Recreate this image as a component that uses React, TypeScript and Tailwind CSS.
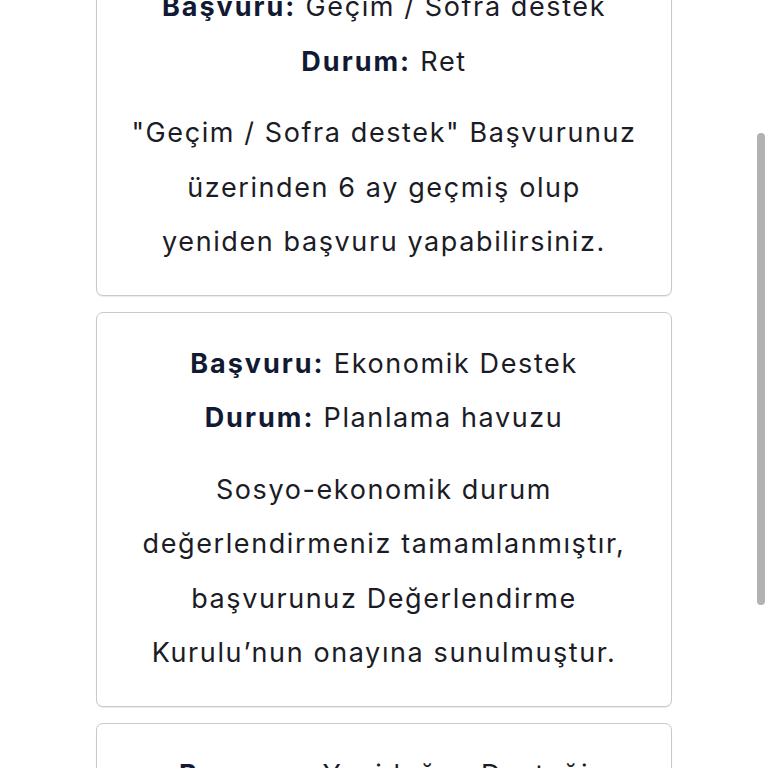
import React from "react";

type Item = {
  basvuru: string;
  durum: string;
  lines: string[];
};

const items: Item[] = [
  {
    basvuru: "Geçim / Sofra destek",
    durum: "Ret",
    lines: ['"Geçim / Sofra destek" Başvurunuz', "üzerinden 6 ay geçmiş olup", "yeniden başvuru yapabilirsiniz."],
  },
  {
    basvuru: "Ekonomik Destek",
    durum: "Planlama havuzu",
    lines: [
      "Sosyo-ekonomik durum",
      "değerlendirmeniz tamamlanmıştır,",
      "başvurunuz Değerlendirme",
      "Kurulu’nun onayına sunulmuştur.",
    ],
  },
  {
    basvuru: "Yenidoğan Desteği",
    durum: "Onay",
    lines: ["Başvurunuz onaylanmıştır."],
  },
];

const Card = ({ item }: { item: Item }) => (
  <div className="w-[576px] border border-[#c9c9c9] rounded-[7px] bg-white pt-[24px] pb-[25px] text-center shadow-[0_1px_1px_rgba(0,0,0,0.08)]">
    <p className="leading-[54.5px] text-[#121a33]">
      <span className="font-bold tracking-[2px]">Başvuru:</span>{" "}
      <span className="text-[#1b1c26]">{item.basvuru}</span>
    </p>
    <p className="leading-[54.5px] text-[#121a33]">
      <span className="font-bold tracking-[2px]">Durum:</span>{" "}
      <span className="text-[#1b1c26]">{item.durum}</span>
    </p>
    <p className="mt-[17px] leading-[54.5px] text-[#1b1c26]">
      {item.lines.map((l, i) => (
        <React.Fragment key={i}>
          {l}
          {i < item.lines.length - 1 && <br />}
        </React.Fragment>
      ))}
    </p>
  </div>
);

export default function App() {
  return (
    <div
      className="relative w-[768px] h-[768px] overflow-hidden bg-white text-[27px] tracking-[1.6px]"
      style={{ fontFamily: "Inter, 'Noto Sans', sans-serif" }}
    >
      <div className="flex flex-col items-center gap-[16px] -mt-[45px]">
        {items.map((it, i) => (
          <Card key={i} item={it} />
        ))}
      </div>
      <div className="absolute right-[3px] top-[133px] w-[8px] h-[472px] rounded-full bg-[#b2b2b2]" />
    </div>
  );
}
